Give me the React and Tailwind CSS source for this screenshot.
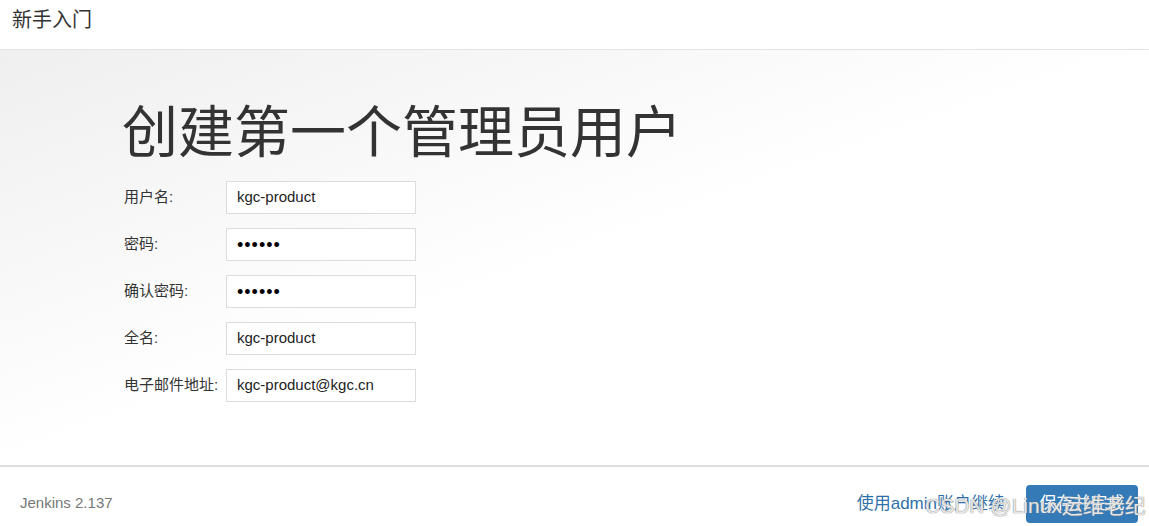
import React from "react";

const fields = [
  { label: "用户名:", value: "kgc-product" },
  { label: "密码:", value: "••••••", secret: true },
  { label: "确认密码:", value: "••••••", secret: true },
  { label: "全名:", value: "kgc-product" },
  { label: "电子邮件地址:", value: "kgc-product@kgc.cn" },
];

const App = () => {
  return (
    <div
      className="relative w-[1149px] h-[526px] flex flex-col bg-white overflow-hidden"
      style={{ fontFamily: '"Liberation Sans", Arial, "Noto Sans CJK SC", sans-serif' }}
    >
      {/* Header */}
      <div className="h-[50px] shrink-0 border-b border-[#e3e3e3] flex items-center px-[12px]">
        <span className="text-[20px] text-[#333] leading-none -mt-[10px]">新手入门</span>
      </div>

      {/* Body */}
      <div className="flex-1 bg-gradient-to-br from-[#efefef] via-white to-white pl-[122px] pt-[55px]">
        <h1 className="text-[56px] leading-none text-[#333]">创建第一个管理员用户</h1>
        <div className="mt-[20px] flex flex-col gap-[14px]">
          {fields.map((f) => (
            <div key={f.label} className="flex items-start">
              <div className="w-[104px] pl-[2px] pt-[5px] text-[15px] text-[#333]">{f.label}</div>
              <div className="w-[190px] h-[33px] border border-[#dcdcdc] bg-white flex items-center px-[10px]">
                {f.secret ? (
                  <span className="text-[18px] text-black tracking-[1px] leading-none">{f.value}</span>
                ) : (
                  <span className="text-[15px] text-[#222]">{f.value}</span>
                )}
              </div>
            </div>
          ))}
        </div>
      </div>

      {/* Footer */}
      <div className="h-[61px] shrink-0 border-t-2 border-[#dedede] flex items-center justify-between pl-[20px] pr-[11px]">
        <span className="text-[15px] text-[#777] mt-[14px]">Jenkins 2.137</span>
        <div className="flex items-center gap-[21px] mt-[14px]">
          <span className="text-[17px] text-[#2f6fa8]">使用admin账户继续</span>
          <button className="h-[38px] w-[112px] rounded-[4px] bg-[#337ab7] text-white text-[17px]">
            保存并完成
          </button>
        </div>
      </div>

      {/* Watermark */}
      <div
        className="absolute left-[925px] top-[490px] text-[21px] text-white/80 whitespace-nowrap pointer-events-none"
        style={{ textShadow: "0 0 1px #888, 0 0 1px #888" }}
      >
        CSDN @Linux运维老纪
      </div>
    </div>
  );
};

export default App;
